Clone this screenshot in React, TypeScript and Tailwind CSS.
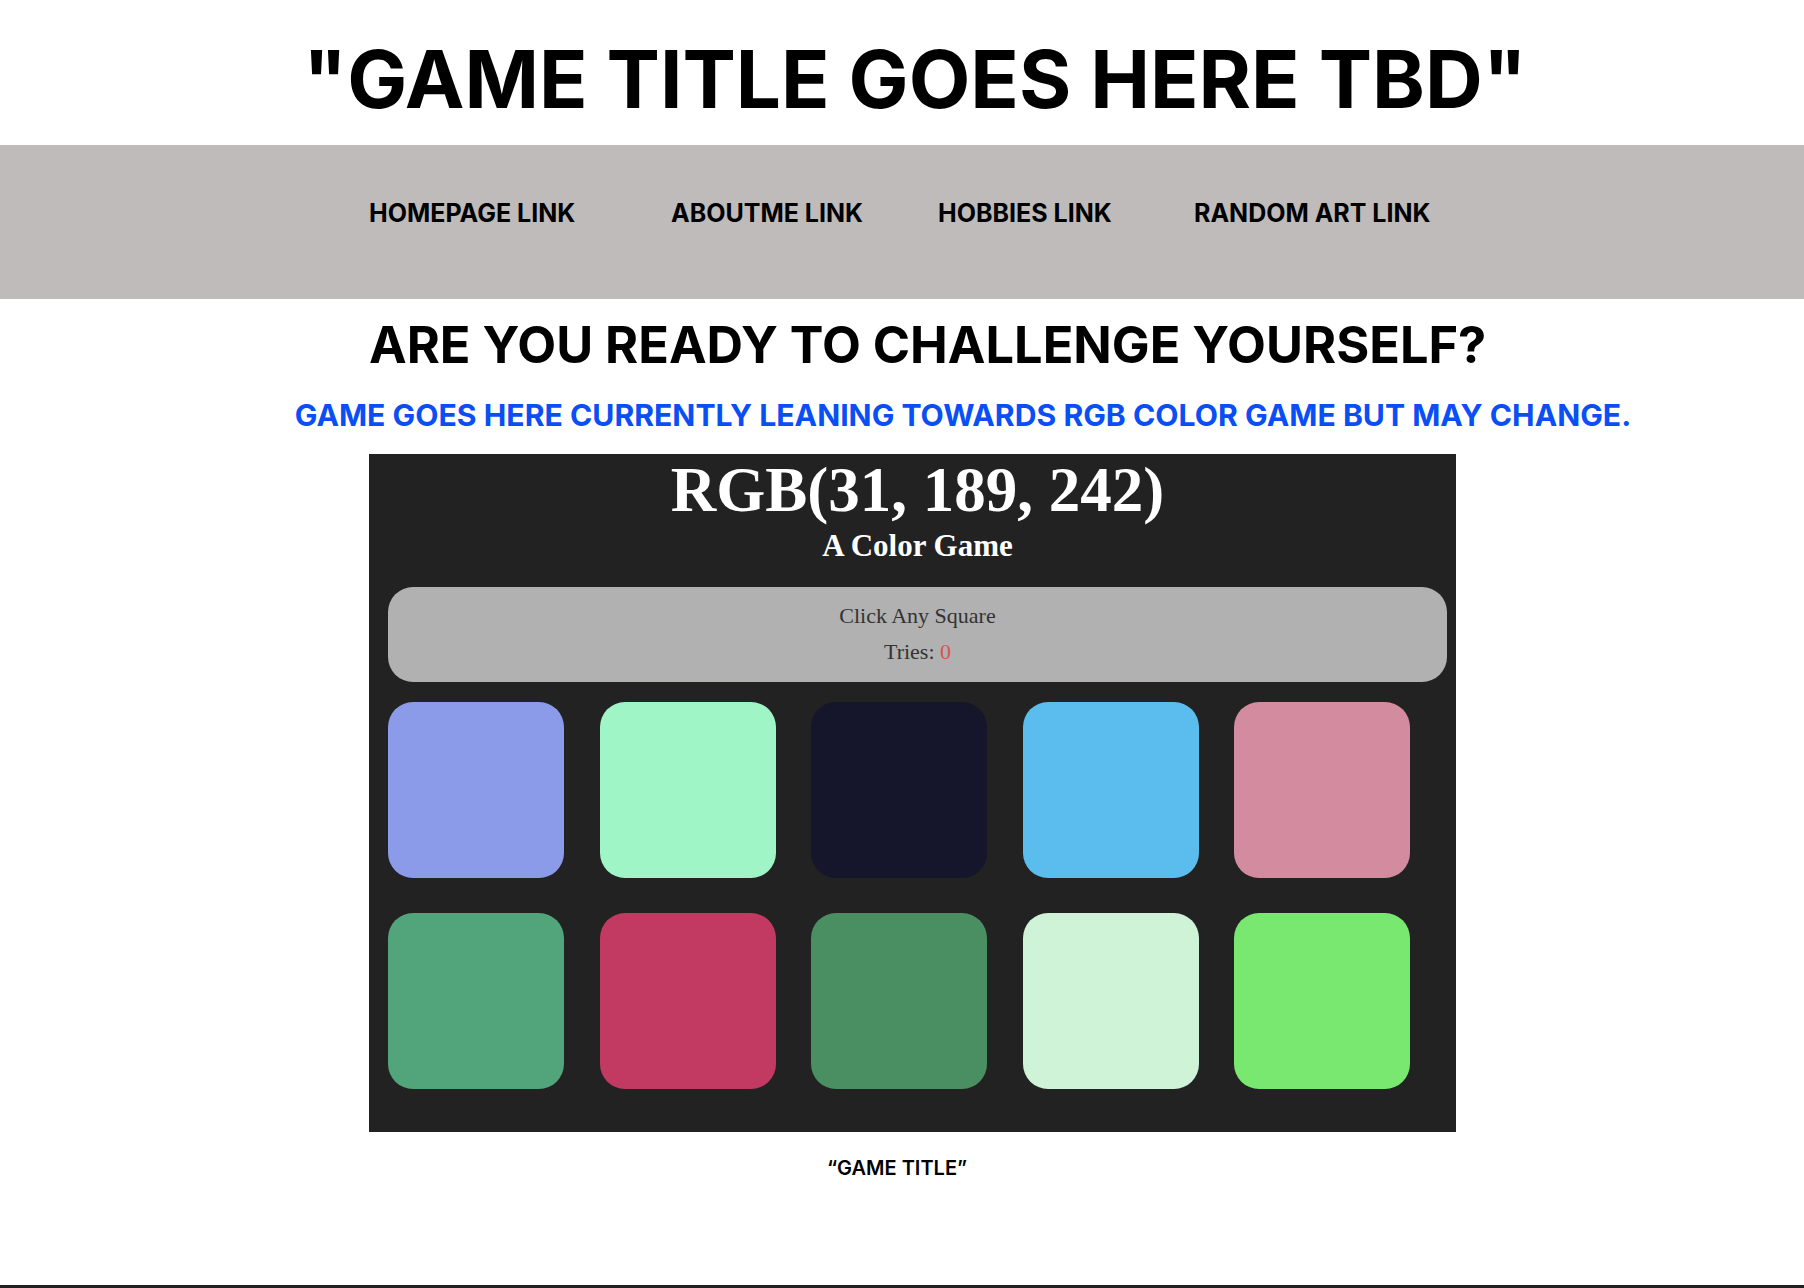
const squares = [
  "#8b9ae9",
  "#9ff5c6",
  "#15152b",
  "#5bbdee",
  "#d38b9f",
  "#52a57a",
  "#c23a61",
  "#4a8f62",
  "#cff3d7",
  "#78e870",
];

const links = [
  { label: "HOMEPAGE LINK", cls: "w-[302px]" },
  { label: "ABOUTME LINK", cls: "w-[267px]" },
  { label: "HOBBIES LINK", cls: "w-[256px]" },
  { label: "RANDOM ART LINK", cls: "" },
];

export default function App() {
  return (
    <div className="min-h-[1288px] bg-white flex flex-col font-['Inter',sans-serif] text-black">
      <header className="h-[145px] flex items-center justify-center pl-[26px] pt-[12px]">
        <h1 className="text-[80px] font-bold leading-none">"GAME TITLE GOES HERE TBD"</h1>
      </header>

      <nav className="h-[154px] bg-[#bfbbba] flex items-center pl-[369px] pb-[18px]">
        {links.map((l) => (
          <a key={l.label} href="#" className={`${l.cls} text-[25px] font-bold leading-none`}>
            {l.label}
          </a>
        ))}
      </nav>

      <h2 className="mt-[21px] pl-[369px] text-[50.5px] font-bold leading-none">ARE YOU READY TO CHALLENGE YOURSELF?</h2>

      <p className="mt-[29px] text-center pl-[122px] text-[30.2px] font-bold leading-none text-[#0a4ff5]">
        GAME GOES HERE CURRENTLY LEANING TOWARDS RGB COLOR GAME BUT MAY CHANGE.
      </p>

      <div className="ml-[369px] mt-[24px] w-[1087px] h-[678px] bg-[#222222] font-['Liberation_Serif',serif] pl-[19px] pr-[9px] flex flex-col">
        <div className="text-center text-white font-bold leading-none">
          <div className="text-[63px] pt-[5px]">RGB(31, 189, 242)</div>
          <div className="text-[31px] mt-[8px]">A Color Game</div>
        </div>
        <div className="mt-[26px] h-[95px] rounded-[25px] bg-[#b1b1b1] flex flex-col items-center justify-center gap-[14px] text-[22px] leading-none text-[#333333]">
          <div>Click Any Square</div>
          <div>
            Tries: <span className="text-[#d9534f]">0</span>
          </div>
        </div>
        <div className="mt-[20px] grid grid-cols-5 w-[1022px] gap-x-[36px] gap-y-[35px]">
          {squares.map((c, i) => (
            <div key={i} className="h-[176px] w-[176px] rounded-[25px]" style={{ backgroundColor: c }} />
          ))}
        </div>
      </div>

      <p className="mt-[26px] text-center pr-[10px] text-[20px] font-semibold leading-none">“GAME TITLE”</p>

      <div className="mt-auto h-[3px] bg-[#222222]" />
    </div>
  );
}
